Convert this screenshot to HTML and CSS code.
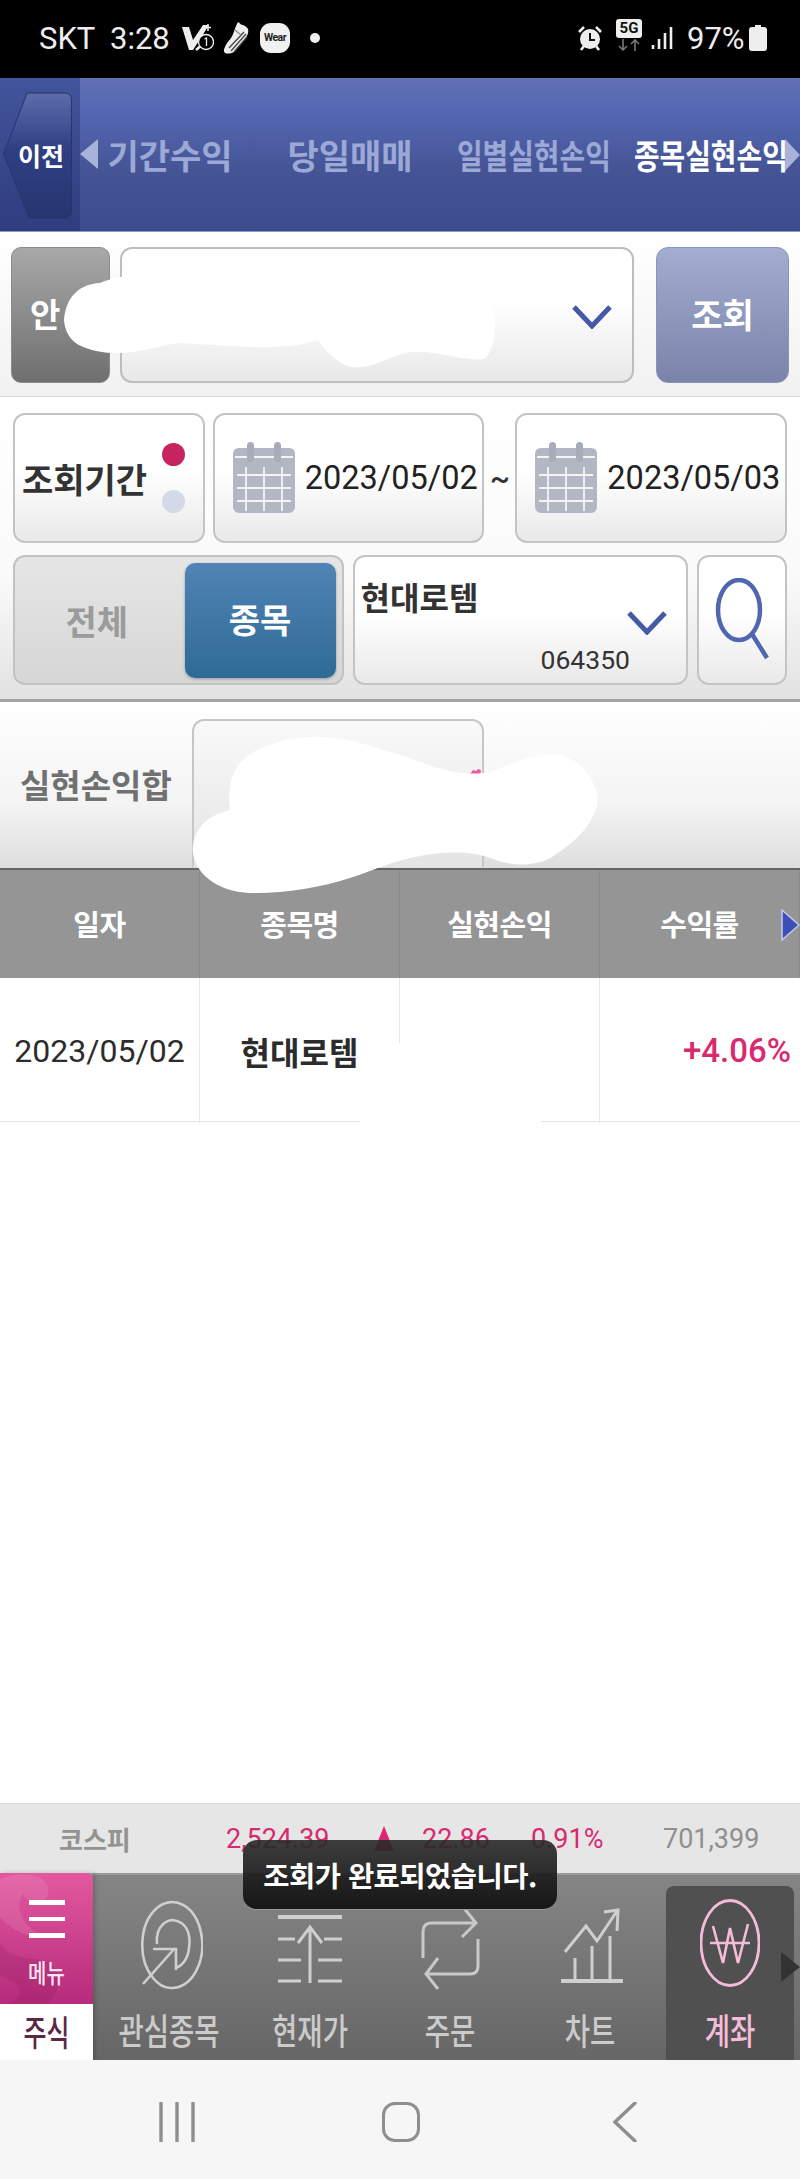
FILE: index.html
```html
<!DOCTYPE html>
<html lang="ko">
<head>
  <meta charset="UTF-8" />
  <meta name="viewport" content="width=device-width, initial-scale=1" />
  <title>종목실현손익</title>
  <link rel="stylesheet" href="styles.css">
</head>
<body>
  <div class="page">

    <!-- Status bar -->
    <div class="status">
      <span class="carrier">SKT</span>
      <span class="clock">3:28</span>
      <svg class="st-volte" viewBox="0 0 32 28"><path d="M0 3h7l4 13L21 1h6L11 26H7z" fill="#eee"/><path d="M14 26l8-7" stroke="#eee" stroke-width="2.500"/><path d="M26 0v7M23 3.500h6" stroke="#eee" stroke-width="1.500"/><circle cx="24" cy="18" r="7.500" fill="#000" stroke="#eee" stroke-width="1.300"/><path d="M22.500 15l2-1v8" fill="none" stroke="#eee" stroke-width="1.300"/></svg>
      <svg class="st-shoe" viewBox="0 0 26 32"><path d="M15 0c2 1 3 3 5 3 2 1 4 2 5 4 1 4-1 7-3 10L12 29c-3 3-8 3-10 2-2-2-1-4 0-6 2-5 4-6 6-9 3-4 3-9 7-16z" fill="#eee"/><path d="M8 29L23 12M6 26L21 10M11 30L24 15" stroke="#444" stroke-width="1.300"/><path d="M12 8l6 5" stroke="#888" stroke-width="1.200"/></svg>
      <span class="st-wear">Wear</span>
      <span class="st-dot"></span>
      <span class="st-fill"></span>
      <svg class="st-alarm" viewBox="0 0 24 26"><circle cx="12" cy="14" r="10" fill="#eee"/><path d="M1 7l5-5M23 7l-5-5M3 25l3-4M21 25l-3-4" stroke="#eee" stroke-width="2.600"/><path d="M12 8v7h5" fill="none" stroke="#111" stroke-width="2"/></svg>
      <span class="st-net">
        <span class="st-5g">5G</span>
        <svg viewBox="0 0 26 12"><path d="M7 0v11M3 7l4 4 4-4M19 12V1M15 5l4-4 4 4" fill="none" stroke="#777" stroke-width="1.600"/></svg>
      </span>
      <svg class="st-signal" viewBox="0 0 22 24"><path d="M2 19v4M8 13v10M14 7v16M20 1v22" stroke="#eee" stroke-width="2.600"/></svg>
      <span class="st-batt">97%</span>
      <svg class="st-battery" viewBox="0 0 18 26"><path d="M6 0h6v2h3c2 0 3 1 3 3v18c0 2-1 3-3 3H3c-2 0-3-1-3-3V5c0-2 1-3 3-3h3z" fill="#eee"/></svg>
    </div>

    <!-- Screen title tabs -->
    <div class="topnav">
      <div class="prev-col">
        <svg class="prev-shape" viewBox="0 0 72 130">
          <defs>
            <linearGradient id="prevGrad" x1="0" y1="0" x2="0" y2="1">
              <stop offset="0" stop-color="#5d6ca9"/>
              <stop offset="0.45" stop-color="#2e3f84"/>
              <stop offset="1" stop-color="#27366f"/>
            </linearGradient>
          </defs>
          <path d="M26 1H64Q71 1 71 8V120Q71 128 64 128H28L2 63z" fill="url(#prevGrad)" stroke="#27346f"/>
        </svg>
        <span class="prev-label">이전</span>
      </div>
      <div class="tab tab-1"><span>기간수익</span></div>
      <div class="tab tab-2"><span>당일매매</span></div>
      <div class="tab tab-3"><span class="squeeze">일별실현손익</span></div>
      <div class="tab tab-4 active"><span class="squeeze">종목실현손익</span></div>
      <span class="tri tri-left"></span>
      <span class="tri tri-right"></span>
    </div>

    <!-- Account row -->
    <div class="account-row">
      <div class="btn-gray">안</div>
      <div class="select account-select">
        <svg class="chev" viewBox="0 0 40 24"><path d="M2 2l18 19L38 2" fill="none" stroke="#4659a5" stroke-width="5"/></svg>
      </div>
      <div class="btn-query">조회</div>
    </div>

    <!-- Search conditions -->
    <div class="filters">
      <div class="filter-line">
        <div class="box period">
          <span class="period-label">조회기간</span>
          <span class="dots"><i class="dot on"></i><i class="dot"></i></span>
        </div>
        <div class="box date date-from">
          <svg class="cal" viewBox="0 0 62 72"><path d="M6 6H56Q62 6 62 12V64Q62 71 55 71H7Q0 71 0 64V12Q0 6 6 6z" fill="#b3b7c4"/><path d="M2 15H60" stroke="#f4f4f4" stroke-width="2"/><path d="M4 33H58M4 46H58M4 59H58M13 25V69M31 25V69M49 25V69" stroke="#f4f4f4" stroke-width="1.800"/><rect x="14" y="0" width="7" height="20" rx="3.500" fill="#a8acb9"/><rect x="41" y="0" width="7" height="20" rx="3.500" fill="#a8acb9"/></svg>
          <span class="date-text">2023/05/02</span>
        </div>
        <span class="tilde">~</span>
        <div class="box date">
          <svg class="cal" viewBox="0 0 62 72"><path d="M6 6H56Q62 6 62 12V64Q62 71 55 71H7Q0 71 0 64V12Q0 6 6 6z" fill="#b3b7c4"/><path d="M2 15H60" stroke="#f4f4f4" stroke-width="2"/><path d="M4 33H58M4 46H58M4 59H58M13 25V69M31 25V69M49 25V69" stroke="#f4f4f4" stroke-width="1.800"/><rect x="14" y="0" width="7" height="20" rx="3.500" fill="#a8acb9"/><rect x="41" y="0" width="7" height="20" rx="3.500" fill="#a8acb9"/></svg>
          <span class="date-text">2023/05/03</span>
        </div>
      </div>
      <div class="filter-line filter-line-2">
        <div class="toggle">
          <span class="toggle-off">전체</span>
          <span class="toggle-on">종목</span>
        </div>
        <div class="box stock">
          <span class="stock-name">현대로템</span>
          <svg class="chev chev-stock" viewBox="0 0 40 24"><path d="M2 2l18 19L38 2" fill="none" stroke="#4659a5" stroke-width="5"/></svg>
          <span class="stock-code">064350</span>
        </div>
        <div class="box search">
          <svg viewBox="0 0 56 84"><ellipse cx="25" cy="32" rx="21" ry="30" fill="none" stroke="#5166b0" stroke-width="4.500"/><path d="M38 56L53 80" stroke="#5166b0" stroke-width="4.500"/></svg>
        </div>
      </div>
    </div>

    <!-- Total -->
    <div class="summary">
      <span class="summary-label">실현손익합</span>
      <div class="summary-box"></div>
    </div>

    <!-- Result table -->
    <div class="grid-head">
      <div>일자</div>
      <div>종목명</div>
      <div>실현손익</div>
      <div>수익률</div>
      <svg class="more" viewBox="0 0 19 32"><path d="M1 1L18 16 1 31z" fill="#3f4fb9" stroke="#c6cbe6" stroke-width="1.500"/></svg>
    </div>
    <div class="grid-row">
      <div>2023/05/02</div>
      <div class="name">현대로템</div>
      <div></div>
      <div class="rate">+4.06%</div>
    </div>

    <div class="blank"></div>

    <!-- Index ticker -->
    <div class="ticker">
      <span class="tk-name">코스피</span>
      <span class="tk-val">2,524.39</span>
      <span class="tk-up"></span>
      <span class="tk-diff">22.86</span>
      <span class="tk-pct">0.91%</span>
      <span class="tk-vol">701,399</span>
    </div>

    <!-- Bottom menu -->
    <div class="dock">
      <div class="dock-menu">
        <div class="menu-pink">
          <svg class="swirl" viewBox="0 0 93 131"><path d="M0 6C24 -4 52 2 48 22 44 34 24 30 24 20 12 34 24 58 48 64 30 66 12 58 0 44z" fill="#fff" opacity="0.1"/><path d="M0 70C14 92 36 80 52 92 64 102 60 118 48 131H10C24 122 22 110 6 106 2 104 0 102 0 100z" fill="#8f1c60" opacity="0.22"/></svg>
          <span class="burger"><i></i><i></i><i></i></span>
          <span class="menu-text"><span>메뉴</span></span>
        </div>
        <div class="menu-stock"><span>주식</span></div>
      </div>

      <div class="dock-item item-fav">
        <svg viewBox="0 0 64 90" class="dock-icon"><path d="M14 78A30 43 0 1 1 32 88Q22 88 14 78" fill="none" stroke="#cfcfcf" stroke-width="2.600"/><path d="M18 44C16 24 30 20 34 20 48 22 52 34 50 48 49 58 44 66 36 68" fill="none" stroke="#cfcfcf" stroke-width="2.600"/><path d="M4 84L36 48M14 49H37V70" fill="none" stroke="#cfcfcf" stroke-width="2.600"/></svg>
        <span class="dock-text">관심종목</span>
      </div>
      <div class="dock-item item-price">
        <svg viewBox="0 0 66 72" class="dock-icon"><path d="M1 4H65" stroke="#cfcfcf" stroke-width="4"/><path d="M1 26H18M47 26H65M1 47H24M41 47H65M1 68H24M41 68H65" stroke="#cfcfcf" stroke-width="3"/><path d="M33 70V14M21 30L33 14 45 30" fill="none" stroke="#cfcfcf" stroke-width="3"/></svg>
        <span class="dock-text">현재가</span>
      </div>
      <div class="dock-item item-order">
        <svg viewBox="0 0 60 84" class="dock-icon"><path d="M2 52V26Q2 17 10 17H54M42 1L55 17 41 31" fill="none" stroke="#c9c9c9" stroke-width="3"/><path d="M57 33V60Q57 68 49 68H6M17 52L5 68 17 83" fill="none" stroke="#c9c9c9" stroke-width="3"/></svg>
        <span class="dock-text">주문</span>
      </div>
      <div class="dock-item item-chart">
        <svg viewBox="0 0 64 76" class="dock-icon"><path d="M1 73H63" stroke="#cfcfcf" stroke-width="4"/><path d="M15 50V72M32 38V72M50 28V72" stroke="#cfcfcf" stroke-width="3"/><path d="M5 44L26 18 37 33 57 3M44 4L58 2 57 23" fill="none" stroke="#cfcfcf" stroke-width="3"/></svg>
        <span class="dock-text">차트</span>
      </div>
      <div class="dock-item item-account">
        <svg viewBox="0 0 60 88" class="dock-icon"><ellipse cx="30" cy="44" rx="29" ry="42.500" fill="none" stroke="#f5bcd9" stroke-width="2.800"/><path d="M13 27L23 64 30 29 38 64 48 25M10 44H50" fill="none" stroke="#f5bcd9" stroke-width="2.600"/></svg>
        <span class="dock-text">계좌</span>
      </div>
      <span class="dock-more"></span>
    </div>

    <!-- Phone navigation -->
    <div class="softkeys">
      <svg viewBox="0 0 36 40" class="key-recent"><path d="M2 1V39M18 1V39M34 1V39" stroke="#8e8e8e" stroke-width="3.400" stroke-linecap="round"/></svg>
      <span class="key-home"></span>
      <svg viewBox="0 0 24 40" class="key-back"><path d="M22 1L2 20 22 39" fill="none" stroke="#8e8e8e" stroke-width="3.400" stroke-linecap="round"/></svg>
    </div>

    <!-- Blanked out parts of the capture -->
    <svg class="blanks" viewBox="0 0 800 2179">
      <path d="M64 320C66 296 80 284 100 283 130 268 300 262 480 270 498 300 500 340 486 358 470 364 440 350 410 352 390 356 370 370 350 367 335 362 325 350 318 340 280 352 240 346 180 343 160 345 140 354 110 353 84 350 66 344 64 320z" fill="#fff"/>
      <path d="M470 774l3-4 3 1 2-2 3 1-1 7-9 1z" fill="#ea5c9c"/>
      <path d="M316 737C350 736 380 750 408 757 430 766 460 778 490 772 520 760 540 752 561 755 585 762 600 785 597 806 590 830 570 845 555 855 540 866 515 868 490 858 470 850 440 852 420 856 395 860 375 870 350 878 320 888 280 894 250 893 215 892 190 870 193 845 196 825 210 815 230 810 226 780 235 755 270 745 285 738 300 737 316 737z" fill="#fff"/>
      <path d="M360 1124V1108L399 1043H541V1124z" fill="#fff"/>
    </svg>

    <div class="toast">조회가 완료되었습니다.</div>
  </div>
</body>
</html>
```

FILE: styles.css
```css
/* Base */
* {
  box-sizing: border-box;
}

body {
  margin: 0;
  background: #fff;
  font-family: Roboto, "Noto Sans CJK KR", sans-serif;
  color: #222;
}

.page {
  position: relative;
  width: 800px;
  height: 2179px;
  overflow: hidden;
  display: flex;
  flex-direction: column;
}

/* Status bar */
.status {
  height: 78px;
  flex: none;
  background: #000;
  color: #eee;
  display: flex;
  align-items: center;
  padding: 0 33px 2px 39px;
  font-size: 31px;
}

.carrier {
  width: 71px;
}

.clock {
  width: 72px;
}

.st-volte {
  width: 32px;
  height: 28px;
}

.st-shoe {
  width: 26px;
  height: 32px;
  margin-left: 9px;
}

.st-wear {
  width: 30px;
  height: 30px;
  margin-left: 11px;
  background: #f1f1f1;
  border-radius: 11px;
  color: #222;
  font-size: 10.5px;
  font-weight: 700;
  line-height: 30px;
  text-align: center;
  letter-spacing: -0.5px;
}

.st-dot {
  width: 10px;
  height: 10px;
  margin-left: 20px;
  background: #f1f1f1;
  border-radius: 50%;
}

.st-fill {
  flex: 1;
}

.st-alarm {
  width: 24px;
  height: 26px;
}

.st-net {
  width: 26px;
  margin-left: 14px;
  display: flex;
  flex-direction: column;
  margin-top: -6px;
}

.st-5g {
  height: 19px;
  background: #eee;
  border-radius: 3px;
  color: #111;
  font-size: 15px;
  font-weight: 700;
  line-height: 19px;
  text-align: center;
}

.st-net svg {
  height: 12px;
  margin-top: 1px;
}

.st-signal {
  width: 22px;
  height: 24px;
  margin-left: 9px;
}

.st-batt {
  margin-left: 14px;
  width: 62px;
}

.st-battery {
  width: 18px;
  height: 26px;
}

/* Screen tabs */
.topnav {
  position: relative;
  height: 154px;
  flex: none;
  display: flex;
  align-items: center;
  background: linear-gradient(#6071b6, #5466b1 25%, #445495 60%, #3b4b8f);
  border-bottom: 1px solid #8f9ac4;
  font-family: "Noto Sans CJK KR", sans-serif;
  font-size: 34px;
}

.prev-col {
  position: relative;
  width: 80px;
  align-self: stretch;
  flex: none;
  background: linear-gradient(#42549c, #2f3d7e);
  display: flex;
  align-items: center;
  justify-content: center;
}

.prev-shape {
  position: absolute;
  left: 1px;
  top: 14px;
  width: 72px;
  height: 128px;
}

.prev-label {
  position: relative;
  left: 1px;
  color: #fff;
  font-size: 25px;
  font-weight: 700;
}

.tri {
  position: absolute;
  top: 61px;
  width: 0;
  height: 0;
  border-style: solid;
}

.tri-left {
  left: 80px;
  border-width: 15px 18px 15px 0;
  border-color: transparent #a9b3da transparent transparent;
}

.tri-right {
  right: 0;
  border-width: 16px 0 16px 15px;
  border-color: transparent transparent transparent #a9b3da;
}

.tab {
  text-align: center;
  color: #9ca8d5;
  white-space: nowrap;
  font-weight: 700;
}

.tab span {
  display: inline-block;
}

.tab .squeeze {
  transform: scaleX(0.82);
}

.tab-1 {
  width: 180px;
}

.tab-2 {
  width: 180px;
}

.tab-3 {
  width: 177px;
}

.tab-4 {
  width: 178px;
}

.tab.active {
  color: #fff;
}

/* Account row */
.account-row {
  height: 165px;
  flex: none;
  display: flex;
  padding: 15px 11px 14px 11px;
  background: linear-gradient(#fff, #f1f1f1);
  border-bottom: 1px solid #d6d6d6;
  font-family: "Noto Sans CJK KR", sans-serif;
}

.btn-gray {
  width: 99px;
  height: 136px;
  border-radius: 10px;
  background: linear-gradient(#a8a8a8, #6f6f6f);
  border: 1px solid #8b8b8b;
  color: #fff;
  font-size: 33px;
  font-weight: 700;
  line-height: 130px;
  padding-left: 18px;
}

.select {
  position: relative;
  background: linear-gradient(#fff 40%, #e8e8e8);
  border: 2px solid #bdbdbd;
  border-radius: 12px;
}

.account-select {
  width: 514px;
  height: 136px;
  margin-left: 10px;
}

.chev {
  width: 40px;
  height: 24px;
}

.account-select .chev {
  position: absolute;
  right: 20px;
  top: 56px;
}

.btn-query {
  width: 133px;
  height: 136px;
  margin-left: 22px;
  border-radius: 12px;
  border: 1px solid #8a93bb;
  background: linear-gradient(#a2add0, #7a83aa);
  color: #fff;
  font-size: 34px;
  font-weight: 700;
  line-height: 132px;
  text-align: center;
}

/* Search conditions */
.filters {
  height: 305px;
  flex: none;
  padding: 16px 13px 0 13px;
  background: linear-gradient(#fff, #fafafa 60%, #e2e2e2);
  border-bottom: 3px solid #a4a4a4;
}

.filter-line {
  display: flex;
  align-items: center;
  height: 130px;
}

.filter-line-2 {
  margin-top: 12px;
}

.box {
  height: 130px;
  background: linear-gradient(#fff 45%, #e9e9e9);
  border: 2px solid #c4c4c4;
  border-radius: 12px;
  display: flex;
  align-items: center;
}

.period {
  width: 192px;
  padding-left: 7px;
  justify-content: space-between;
  padding-right: 18px;
}

.period-label {
  font-family: "Noto Sans CJK KR", sans-serif;
  font-size: 34px;
  font-weight: 700;
  color: #333;
  white-space: nowrap;
}

.dots {
  display: flex;
  flex-direction: column;
  gap: 24px;
}

.dot {
  display: block;
  width: 23px;
  height: 23px;
  border-radius: 50%;
  background: #d3d9e6;
}

.dot.on {
  background: #c7245f;
}

.date {
  width: 272px;
  padding-left: 18px;
}

.date-from {
  margin-left: 8px;
}

.cal {
  width: 62px;
  height: 72px;
  flex: none;
}

.date-text {
  margin-left: 10px;
  font-size: 32.5px;
  color: #222;
  white-space: nowrap;
}

.tilde {
  width: 31px;
  text-align: center;
  font-size: 30px;
  font-weight: 500;
  color: #333;
}

.toggle {
  position: relative;
  width: 331px;
  height: 130px;
  background: linear-gradient(#e6e6e6, #d6d6d6);
  border: 2px solid #c2c2c2;
  border-radius: 12px;
  display: flex;
  align-items: center;
  padding: 6px;
  font-family: "Noto Sans CJK KR", sans-serif;
  font-size: 34px;
  font-weight: 700;
}

.toggle-off {
  flex: 1;
  padding-right: 12px;
  text-align: center;
  color: #9b9b9b;
}

.toggle-on {
  width: 151px;
  height: 115px;
  line-height: 112px;
  text-align: center;
  color: #fff;
  background: linear-gradient(#5084b4, #2f6a96);
  border-radius: 10px;
  box-shadow: 0 1px 3px rgba(0, 0, 0, 0.3);
}

.stock {
  position: relative;
  width: 336px;
  margin-left: 9px;
}

.stock-name {
  position: absolute;
  left: 6px;
  top: 16px;
  font-family: "Noto Sans CJK KR", sans-serif;
  font-size: 32px;
  font-weight: 700;
  color: #333;
}

.chev-stock {
  position: absolute;
  right: 19px;
  top: 54px;
}

.stock-code {
  position: absolute;
  left: 186px;
  top: 87px;
  font-size: 26.500px;
  color: #333;
}

.search {
  width: 90px;
  margin-left: 9px;
  justify-content: center;
}

.search svg {
  width: 56px;
  height: 84px;
}

/* Total */
.summary {
  height: 166px;
  flex: none;
  display: flex;
  background: linear-gradient(#fff, #f4f4f4 60%, #dedede);
  padding: 17px 0 0 20px;
  font-family: "Noto Sans CJK KR", sans-serif;
}

.summary-label {
  width: 172px;
  margin-top: 41px;
  font-size: 33px;
  font-weight: 700;
  color: #707070;
  white-space: nowrap;
}

.summary-box {
  width: 292px;
  height: 148px;
  background: linear-gradient(#f9f9f9, #e4e4e4);
  border: 2px solid #c6c6c6;
  border-bottom: 0;
  border-radius: 12px 12px 0 0;
}

/* Result table */
.grid-head,
.grid-row {
  flex: none;
  display: grid;
  grid-template-columns: repeat(4, 200px);
}

.grid-head {
  position: relative;
  height: 110px;
  background: #959595;
  border-top: 2px solid #656565;
  font-family: "Noto Sans CJK KR", sans-serif;
  font-size: 29px;
  font-weight: 700;
  color: #fff;
  text-align: center;
}

.grid-head div {
  line-height: 106px;
  border-right: 1px solid #8a8a8a;
  letter-spacing: -0.5px;
}

.more {
  position: absolute;
  right: 0;
  top: 39px;
  width: 19px;
  height: 32px;
}

.grid-row {
  height: 144px;
  border-bottom: 1px solid #e6e6e6;
  font-size: 32px;
  color: #2c2c2c;
  text-align: center;
}

.grid-row div {
  line-height: 146px;
  border-right: 1px solid #e8e8e8;
  white-space: nowrap;
}

.grid-row .name {
  font-family: "Noto Sans CJK KR", sans-serif;
  font-weight: 700;
}

.grid-row .rate {
  padding-right: 9px;
  text-align: right;
  color: #d9296f;
  font-size: 33px;
  font-weight: 500;
  border-right: 0;
}

.blank {
  flex: 1;
}

/* Index ticker */
.ticker {
  position: relative;
  height: 70px;
  flex: none;
  display: flex;
  align-items: center;
  background: #e6e6e6;
  border-top: 1px solid #d8d8d8;
  font-size: 27px;
  color: #d9296f;
  white-space: nowrap;
}

.tk-name {
  width: 226px;
  padding-left: 59px;
  font-family: "Noto Sans CJK KR", sans-serif;
  font-size: 26px;
  font-weight: 700;
  color: #939393;
}

.tk-val {
  width: 148px;
}

.tk-up {
  width: 0;
  height: 0;
  border-style: solid;
  border-width: 0 10px 25px 10px;
  border-color: transparent transparent #d9296f transparent;
  margin-right: 28px;
}

.tk-diff {
  width: 109px;
}

.tk-pct {
  width: 132px;
}

.tk-vol {
  color: #8f8f8f;
}

/* Bottom menu */
.dock {
  position: relative;
  height: 187px;
  flex: none;
  background: linear-gradient(#858585, #666);
  border-top: 2px solid #9a9a9a;
  font-family: "Noto Sans CJK KR", sans-serif;
}

.dock-menu {
  position: absolute;
  left: 0;
  top: -2px;
  width: 93px;
  height: 187px;
  display: flex;
  flex-direction: column;
  box-shadow: 2px 0 4px rgba(0, 0, 0, 0.2);
}

.menu-pink {
  position: relative;
  height: 131px;
  background: linear-gradient(#e3599f, #b62b7b);
  border-radius: 0 6px 0 0;
  display: flex;
  flex-direction: column;
  align-items: center;
  overflow: hidden;
}

.swirl {
  position: absolute;
  left: 0;
  top: 0;
  width: 93px;
  height: 131px;
}

.burger {
  position: relative;
  margin-top: 27px;
  display: flex;
  flex-direction: column;
  gap: 12px;
}

.burger i {
  display: block;
  width: 36px;
  height: 4.500px;
  background: #fff;
}

.menu-text {
  position: relative;
  margin-top: 22px;
  color: #fbe4f0;
  font-size: 20px;
  font-weight: 500;
  line-height: 26px;
}

.menu-text span {
  display: inline-block;
  transform: scaleY(1.3);
}

.menu-stock {
  flex: 1;
  background: #fff;
  color: #5a2844;
  font-size: 25px;
  font-weight: 500;
  text-align: center;
  line-height: 54px;
}

.menu-stock span {
  display: inline-block;
  transform: scaleY(1.4);
}

.dock-item {
  position: absolute;
  top: 0;
  height: 185px;
}

.dock-icon {
  position: absolute;
}

.dock-text {
  position: absolute;
  left: 50%;
  top: 135px;
  color: #cbcbcb;
  font-size: 27.500px;
  font-weight: 500;
  line-height: 38px;
  white-space: nowrap;
  transform: translateX(-50%) scaleY(1.32);
}

.item-fav {
  left: 119px;
  width: 100px;
}

.item-fav .dock-icon {
  left: 20px;
  top: 25px;
  width: 64px;
  height: 90px;
}

.item-price {
  left: 260px;
  width: 100px;
}

.item-price .dock-icon {
  left: 17px;
  top: 38px;
  width: 66px;
  height: 72px;
}

.item-order {
  left: 400px;
  width: 100px;
}

.item-order .dock-icon {
  left: 21px;
  top: 31px;
  width: 60px;
  height: 84px;
}

.item-chart {
  left: 540px;
  width: 100px;
}

.item-chart .dock-icon {
  left: 20px;
  top: 33px;
  width: 64px;
  height: 76px;
}

.item-account {
  left: 666px;
  top: 11px;
  width: 128px;
  height: 174px;
  background: #505050;
  border-radius: 8px 8px 0 0;
}

.item-account .dock-icon {
  left: 34px;
  top: 13px;
  width: 60px;
  height: 88px;
}

.item-account .dock-text {
  top: 124px;
  color: #f5bcd9;
}

.dock-more {
  position: absolute;
  right: 0;
  top: 77px;
  width: 0;
  height: 0;
  border-style: solid;
  border-width: 15px 0 15px 19px;
  border-color: transparent transparent transparent #333;
}

/* Phone navigation */
.softkeys {
  position: relative;
  height: 119px;
  flex: none;
  background: #f6f6f6;
}

.softkeys svg,
.key-home {
  position: absolute;
  top: 42px;
  height: 40px;
}

.key-recent {
  left: 159px;
  width: 36px;
}

.key-home {
  left: 382px;
  width: 38px;
  border: 3.500px solid #8e8e8e;
  border-radius: 13px;
}

.key-back {
  left: 613px;
  width: 24px;
}

/* Overlays */
.blanks {
  position: absolute;
  left: 0;
  top: 0;
  width: 800px;
  height: 2179px;
}

.toast {
  position: absolute;
  left: 243px;
  top: 1840px;
  width: 314px;
  height: 70px;
  background: linear-gradient(rgba(42, 42, 42, 0.9), rgba(20, 20, 20, 0.97));
  border-radius: 14px;
  border-bottom: 1px solid #999;
  color: #fff;
  font-family: "Noto Sans CJK KR", sans-serif;
  font-size: 28.500px;
  font-weight: 700;
  line-height: 70px;
  text-align: center;
  letter-spacing: -0.500px;
  white-space: nowrap;
}
```
